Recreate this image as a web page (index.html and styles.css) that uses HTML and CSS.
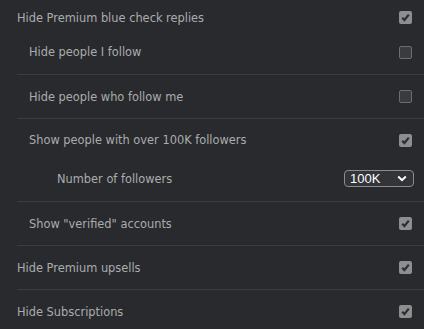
FILE: index.html
```html
<!DOCTYPE html>
<html>
<head>
<meta charset="utf-8">
<link rel="stylesheet" href="styles.css">
</head>
<body>
<div class="list">
  <div class="row r1">
    <span class="label">Hide Premium blue check replies</span>
    <span class="cb checked"><svg viewBox="0 0 13 13" width="13" height="13"><path d="M3.2 6.8 L5.4 9 L9.8 3.6" fill="none" stroke="#2e2f31" stroke-width="2.2"/></svg></span>
  </div>
  <div class="row r2">
    <span class="label sub">Hide people I follow</span>
    <span class="cb"></span>
  </div>
  <div class="row sep r3">
    <span class="label sub">Hide people who follow me</span>
    <span class="cb"></span>
  </div>
  <div class="row sep r4">
    <span class="label sub">Show people with over 100K followers</span>
    <span class="cb checked"><svg viewBox="0 0 13 13" width="13" height="13"><path d="M3.2 6.8 L5.4 9 L9.8 3.6" fill="none" stroke="#2e2f31" stroke-width="2.2"/></svg></span>
  </div>
  <div class="row r5">
    <span class="label subsub">Number of followers</span>
    <span class="select">
      <span class="select-text">100K</span>
      <svg class="chev" viewBox="0 0 10 7" width="10" height="7"><path d="M1.2 1.5 L5 5.2 L8.8 1.5" fill="none" stroke="#ffffff" stroke-width="2"/></svg>
    </span>
  </div>
  <div class="row sep r6">
    <span class="label sub">Show "verified" accounts</span>
    <span class="cb checked"><svg viewBox="0 0 13 13" width="13" height="13"><path d="M3.2 6.8 L5.4 9 L9.8 3.6" fill="none" stroke="#2e2f31" stroke-width="2.2"/></svg></span>
  </div>
  <div class="row sep r7">
    <span class="label">Hide Premium upsells</span>
    <span class="cb checked"><svg viewBox="0 0 13 13" width="13" height="13"><path d="M3.2 6.8 L5.4 9 L9.8 3.6" fill="none" stroke="#2e2f31" stroke-width="2.2"/></svg></span>
  </div>
  <div class="row sep r8">
    <span class="label">Hide Subscriptions</span>
    <span class="cb checked"><svg viewBox="0 0 13 13" width="13" height="13"><path d="M3.2 6.8 L5.4 9 L9.8 3.6" fill="none" stroke="#2e2f31" stroke-width="2.2"/></svg></span>
  </div>
</div>
</body>
</html>
```
FILE: styles.css
```css
html, body {
  margin: 0;
  padding: 0;
  background: #292a2d;
  overflow: hidden;
}
body {
  font-family: "DejaVu Sans", Verdana, sans-serif;
  font-size: 11.4px;
  color: #aaacaf;
}
.list {
  padding-left: 17px;
}
.row {
  display: flex;
  align-items: center;
  justify-content: space-between;
  box-sizing: border-box;
  padding-right: 12px;
}
.sep {
  border-top: 1px solid #3b3c40;
}
.label {
  white-space: nowrap;
}
.sub {
  padding-left: 12px;
}
.subsub {
  padding-left: 40px;
}
.r1 { height: 35px; }
.r2 { height: 39px; padding-bottom: 5px; }
.r3 { height: 44px; }
.r4 { height: 41px; padding-top: 2px; }
.r5 { height: 42px; padding-bottom: 3px; }
.r6 { height: 44px; }
.r7 { height: 44px; }
.r8 { height: 44px; }

.cb {
  width: 13px;
  height: 13px;
  box-sizing: border-box;
  border-radius: 2px;
  border: 1px solid #6c6d70;
  background: #3a3b3d;
  display: block;
  flex: none;
}
.cb.checked {
  border: none;
  background: #8d8e90;
}
.cb svg {
  display: block;
}
.select {
  position: relative;
  display: flex;
  align-items: center;
  width: 70px;
  height: 17px;
  box-sizing: border-box;
  border: 1px solid #8b8c8e;
  border-radius: 4px;
  background: #333437;
  margin-right: -2px;
  font-family: "Liberation Sans", Arial, sans-serif;
  font-size: 13px;
  color: #ffffff;
}
.select-text {
  padding-left: 5px;
  line-height: 15px;
}
.chev {
  position: absolute;
  right: 6px;
  top: 4px;
}
```
